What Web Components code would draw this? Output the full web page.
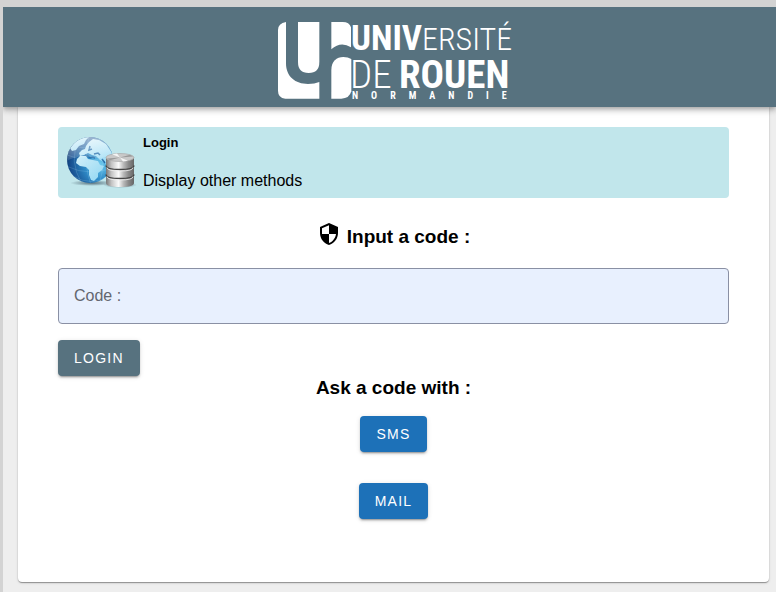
<!DOCTYPE html>
<html lang="en">
<head>
<meta charset="utf-8">
<title>Login</title>
<style>
html { background: #d3d3d3; }
body { margin: 7px 0 0 3px; background: #eee; font: 16px/20px "Liberation Sans", Arial, sans-serif; color: #000; min-height: calc(100vh - 7px); }
</style>
</head>
<body>
<template id="t-logo">
<style>
:host { display: block; line-height: 0; }
text { font-family: "Roboto Condensed", "Liberation Sans", sans-serif; fill: #fff; }
.light { font-weight: 300; }
.bold { font-weight: 700; }
.sub { font-size: 10px; font-weight: 700; letter-spacing: 13px; }
</style>
<svg width="234" height="86" viewBox="278 14 234 86" overflow="visible" role="img" aria-label="Université de Rouen Normandie">
<g transform="translate(270 8) scale(.33333)" fill="#fff">
<path d="M48 42V166C48 206 76 228 114 228Q134 228 148 222V272H46Q24 270 24 248V66Q24 46 48 42Z"/>
<path d="M84 42H148V162Q148 195 116 195Q84 195 84 162Z"/>
<path d="M184 42H218Q238 42 243 58V118Q212 99 184 124Z"/>
<path d="M184 272V186C184 160 200 147 220 147Q234 147 244 153V250Q238 272 214 272Z"/>
</g>
<text x="351" y="50"><tspan class="bold" font-size="35">UNIV</tspan><tspan class="light" font-size="32">ERSITÉ</tspan></text>
<text x="350" y="88" font-size="39"><tspan class="light">DE</tspan><tspan class="bold" x="399">ROUEN</tspan></text>
<text class="sub" x="352" y="99">NORMANDIE</text>
</svg>
</template>

<template id="t-header">
<style>
:host { display: flex; justify-content: center; padding: 7px 0 7px 10px; background: #57727f; box-shadow: 0 2px 4px -1px rgba(0,0,0,.2), 0 4px 5px rgba(0,0,0,.14), 0 1px 10px rgba(0,0,0,.12); position: relative; z-index: 1; }
</style>
<slot></slot>
</template>

<template id="t-card">
<style>
:host { display: block; margin: 0 7px 0 15px; padding: 20px 40px 63px; background: #fff; border-radius: 0 0 4px 4px; box-shadow: 0 2px 1px -1px rgba(0,0,0,.2), 0 1px 1px rgba(0,0,0,.14), 0 1px 3px rgba(0,0,0,.12), 0 0 1px rgba(0,0,0,.3); }
</style>
<slot></slot>
</template>

<template id="t-globe">
<style>:host { display: block; line-height: 0; }</style>
<svg width="72" height="56" viewBox="0 0 72 56" aria-hidden="true">
<defs>
<radialGradient id="sea" cx=".72" cy=".6" r=".8"><stop offset="0" stop-color="#6fcbee"/><stop offset=".4" stop-color="#2f8cc8"/><stop offset=".8" stop-color="#174f90"/><stop offset="1" stop-color="#0b3268"/></radialGradient>
<linearGradient id="land" x1="0" y1="0" x2="1" y2="1"><stop offset="0" stop-color="#d3f0fa"/><stop offset="1" stop-color="#8fd6f2"/></linearGradient>
<linearGradient id="shine" x1="0" y1="0" x2="0" y2="1"><stop offset="0" stop-color="#fff" stop-opacity=".6"/><stop offset="1" stop-color="#fff" stop-opacity=".1"/></linearGradient>
<linearGradient id="steel"><stop offset="0" stop-color="#777"/><stop offset=".2" stop-color="#c5c5c5"/><stop offset=".45" stop-color="#fafafa"/><stop offset=".62" stop-color="#bbb"/><stop offset=".8" stop-color="#8a8a8a"/><stop offset="1" stop-color="#666"/></linearGradient>
<radialGradient id="shade"><stop offset="0" stop-color="#123" stop-opacity=".6"/><stop offset="1" stop-color="#123" stop-opacity="0"/></radialGradient>
<clipPath id="ball"><circle cx="24" cy="25" r="23"/></clipPath>
</defs>
<ellipse cx="26" cy="48" rx="22" ry="3" fill="url(#shade)"/>
<ellipse cx="54" cy="50" rx="17" ry="3" fill="url(#shade)"/>
<circle cx="24" cy="25" r="23" fill="url(#sea)"/>
<g clip-path="url(#ball)">
<path fill="url(#land)" d="M4 13L10 6L17 1H24L20 5L18 9L13 11L10 15L6 16Z"/>
<path fill="url(#land)" d="M13 18L16 15L19 14L20 11L23 7L27 4L33 5L40 9L46 18L48 27L42 31L38 27L34 25L30 21L26 20L22 18L18 20L14 21Z"/>
<path fill="url(#land)" d="M11 24L14 21L20 21L22 24L27 25L32 26L34 30L38 31L36 35L32 38L32 42L28 46L25 45L23 40L23 35L20 32L14 31L10 28Z"/>
<path fill="none" stroke="#226ba9" stroke-width="1.500" d="M19 20l3 1l2 2l3 -1l2 1M28 19l4 -1l2 2M36 24l3 4M24 11l-1 4l3 -1"/>
<g fill="none" stroke="#b9e6fa" stroke-opacity=".3" stroke-width=".6"><path d="M1 20Q25 30 49 20M0 31Q25 43 50 31M6 10Q25 17 44 10M7 41Q25 52 43 41M23 2Q16 25 25 50M13 5Q2 25 16 49M33 3Q41 25 33 50"/></g>
<path d="M1 26A23 24 0 0 1 46 18Q36 26 23 22Q10 20 1 26Z" fill="url(#shine)"/>
</g>
<g fill="url(#steel)">
<path d="M40 39v9q0 4 14 4t14 -4v-9z"/>
<path d="M40 31v9q0 4 14 4t14 -4v-9z"/>
<path d="M40 22v9q0 4 14 4t14 -4v-9z"/>
</g>
<path d="M40 30.500q0 4 14 4t14 -4M40 39.500q0 4 14 4t14 -4" fill="none" stroke="#444" stroke-width="1.300"/>
<path d="M41 32.500q0 3.500 13 3.500t13 -3.500M41 41.500q0 3.500 13 3.500t13 -3.500" fill="none" stroke="#eee" stroke-width=".8"/>
<ellipse cx="54" cy="22.500" rx="14" ry="4" fill="#c9c9c9" stroke="#aaa" stroke-width=".7"/>
<path fill="#f4f4f4" d="M54 22.500L46 19.300L51 18.600ZM54 22.500L62 25.800L57 26.400Z"/>
<path fill="#9b9b9b" d="M54 22.500L64 19.800L67 21.500ZM54 22.500L44 25.300L41 23.500Z"/>
</svg>
</template>

<template id="t-method">
<style>
:host { display: flex; gap: 5px; padding: 6px 8px 7px; background: #c1e6eb; border-radius: 4px; }
.text { display: flex; flex-direction: column; justify-content: space-between; align-items: flex-start; }
h2 { margin: 0; font-size: 13px; line-height: 20px; }
a { color: inherit; text-decoration: none; line-height: 20px; }
.icon { display: block; padding-top: 2px; }
</style>
<div class="icon"><slot name="icon"></slot></div>
<div class="text"><h2><slot name="title"></slot></h2><a href="#methods"><slot></slot></a></div>
</template>

<template id="t-heading">
<style>
:host { display: block; }
h3 { margin: 0; display: flex; justify-content: center; align-items: center; gap: 6px; font-size: 19px; line-height: 24px; }
svg { display: block; margin-bottom: 6px; }
:host(:not([shield])) svg { display: none; }
</style>
<h3><svg width="24" height="24" viewBox="0 0 24 24" aria-hidden="true"><path d="M12 1L3 5v6c0 5.550 3.840 10.740 9 12 5.160-1.260 9-6.450 9-12V5l-9-4zm0 10.990h7c-.530 4.120-3.280 7.790-7 8.940V12H5V6.300l7-3.110v8.800z"/></svg><span><slot></slot></span></h3>
</template>

<template id="t-field">
<style>
:host { display: block; position: relative; }
input { display: block; box-sizing: border-box; width: 100%; height: 56px; padding: 0 15px; border: 1px solid #8a90a4; border-radius: 4px; background: #e8f0fe; font: inherit; color: #000; }
label { position: absolute; left: 16px; top: 18px; color: #63666f; pointer-events: none; }
</style>
<input id="code" type="text" autocomplete="off"><label for="code"><slot></slot></label>
</template>

<template id="t-button">
<style>
:host { display: block; --bg: #1d71b8; }
:host([tone="slate"]) { --bg: #57727f; }
button { display: block; height: 36px; padding: 0 16px; border: 0; border-radius: 4px; background: var(--bg); color: #fff; font: 14px/36px "Liberation Sans", Arial, sans-serif; letter-spacing: .09em; text-transform: uppercase; box-shadow: 0 3px 1px -2px rgba(0,0,0,.2), 0 2px 2px rgba(0,0,0,.14), 0 1px 5px rgba(0,0,0,.12); }
</style>
<button type="button"><slot></slot></button>
</template>

<template id="t-form">
<style>
:host { display: block; }
form { display: flex; flex-direction: column; align-items: stretch; }
.title { margin-top: 24px; }
.field { margin-top: 16px; }
.submit { margin-top: 16px; align-self: flex-start; }
</style>
<form>
<section-heading class="title" shield>Input a code :</section-heading>
<code-field class="field">Code :</code-field>
<action-button class="submit" tone="slate">Login</action-button>
</form>
</template>

<template id="t-senders">
<style>
:host { display: flex; flex-direction: column; align-items: center; }
.list { display: flex; flex-direction: column; align-items: center; gap: 31px; margin-top: 16px; }
</style>
<slot name="title"></slot>
<div class="list"><slot></slot></div>
</template>

<page-header><uni-logo></uni-logo></page-header>
<login-card>
<method-banner><globe-icon slot="icon"></globe-icon><span slot="title">Login</span>Display other methods</method-banner>
<code-form></code-form>
<code-senders>
<section-heading slot="title">Ask a code with :</section-heading>
<action-button>SMS</action-button>
<action-button>Mail</action-button>
</code-senders>
</login-card>

<script>
const define = (name, id) => customElements.define(name, class extends HTMLElement {
  constructor() {
    super();
    this.attachShadow({ mode: 'open' }).append(document.getElementById(id).content.cloneNode(true));
  }
});
define('uni-logo', 't-logo');
define('page-header', 't-header');
define('login-card', 't-card');
define('globe-icon', 't-globe');
define('method-banner', 't-method');
define('section-heading', 't-heading');
define('code-field', 't-field');
define('action-button', 't-button');
define('code-form', 't-form');
define('code-senders', 't-senders');
</script>
</body>
</html>
